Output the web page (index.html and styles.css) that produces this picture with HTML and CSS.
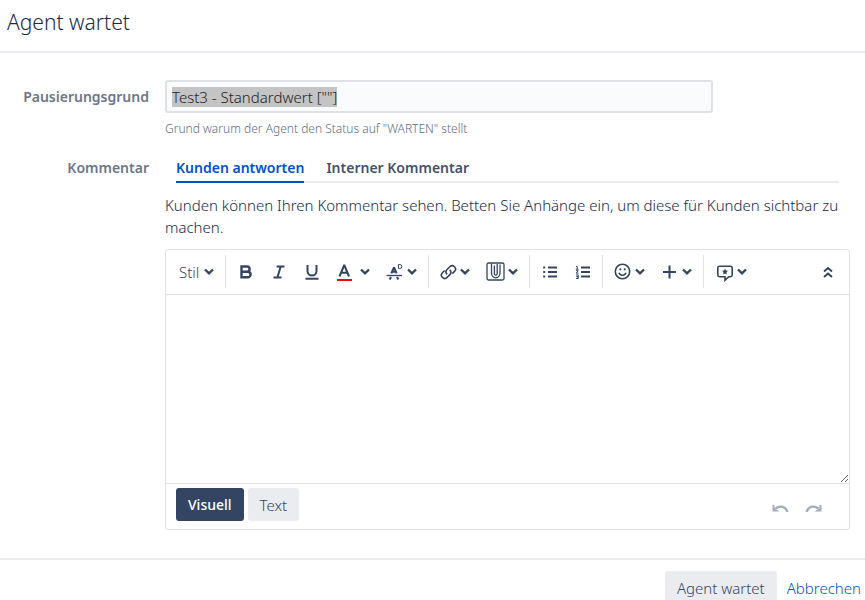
FILE: index.html
```html
<!DOCTYPE html>
<html lang="de">
<head>
  <meta charset="UTF-8">
  <meta name="viewport" content="width=device-width, initial-scale=1.0">
  <title>Agent wartet</title>
  <link rel="stylesheet" href="styles.css">
</head>
<body>
  <header class="dialog-header">
    <h1>Agent wartet</h1>
  </header>

  <form class="dialog-form" id="wait-form">
    <div class="dialog-content">
      <div class="field-group">
        <label class="field-label" for="pause-reason">Pausierungsgrund</label>
        <div class="field-body">
          <input type="text" class="text-field" id="pause-reason" value="Test3 - Standardwert [&quot;&quot;]">
          <div class="description">Grund warum der Agent den Status auf "WARTEN" stellt</div>
        </div>
      </div>

      <div class="field-group">
        <label class="field-label" for="comment">Kommentar</label>
        <div class="field-body">
          <div class="tabs" role="tablist">
            <button type="button" class="tab active" role="tab" aria-selected="true">Kunden antworten</button>
            <button type="button" class="tab" role="tab" aria-selected="false">Interner Kommentar</button>
          </div>
          <p class="hint">Kunden können Ihren Kommentar sehen. Betten Sie Anhänge ein, um diese für Kunden sichtbar zu machen.</p>

          <div class="editor">
            <div class="toolbar">
              <div class="tool-group">
                <button type="button" class="tool menu style-menu">Stil
                  <svg class="chevron" width="10" height="10" viewBox="0 0 10 10"><path d="M1 2.500 5 6.300 9 2.500"/></svg>
                </button>
              </div>
              <div class="tool-group">
                <button type="button" class="tool" aria-label="Fett">
                  <svg width="16" height="16" viewBox="0 0 16 16"><path class="line bold" d="M3.500 2.500h5.500a2.600 2.600 0 0 1 0 5.200H3.500zM3.500 7.700h6.300a2.800 2.800 0 0 1 0 5.600H3.500z"/></svg>
                </button>
                <button type="button" class="tool" aria-label="Kursiv">
                  <svg width="16" height="16" viewBox="0 0 16 16"><path class="line" d="M5.500 2.500h8M2.500 13.500h8M9.700 2.500l-3.300 11"/></svg>
                </button>
                <button type="button" class="tool" aria-label="Unterstrichen">
                  <svg width="16" height="16" viewBox="0 0 16 16"><path class="line" d="M3.500 1v6a4.500 4.500 0 0 0 9 0V1M1.500 14.800h13"/></svg>
                </button>
                <button type="button" class="tool menu color-menu" aria-label="Textfarbe">
                  <svg width="17" height="18" viewBox="0 0 17 18"><path class="line" d="M3.500 13.500 8 2.500h.5L13 13.500M5 9.800h6.500"/><path class="color-bar" d="M1 16h15v2H1z"/></svg>
                  <svg class="chevron" width="10" height="10" viewBox="0 0 10 10"><path d="M1 2.500 5 6.300 9 2.500"/></svg>
                </button>
                <button type="button" class="tool menu" aria-label="Weitere Formatierung">
                  <svg width="17" height="18" viewBox="0 0 17 18"><path class="line" d="M5.300 10.300 7.700 5h.6l2.400 5.300M6.500 8.800h3M5 14l-1.300 2.500M11 14l1.300 2.500"/><path class="line thin" d="M.5 12.500h15.500"/><path class="line fine" d="M12.500 1.500h1.300a2 2 0 0 1 0 4h-1.300z"/></svg>
                  <svg class="chevron" width="10" height="10" viewBox="0 0 10 10"><path d="M1 2.500 5 6.300 9 2.500"/></svg>
                </button>
              </div>
              <div class="tool-group">
                <button type="button" class="tool menu tight" aria-label="Link">
                  <svg width="17" height="16" viewBox="0 0 17 16"><path class="line smile" d="M7.200 10.300A3.300 3.300 0 0 1 6.800 5.700l3-3a3.300 3.300 0 0 1 4.700 4.700L12.300 9.600M9.700 5.900a3.300 3.300 0 0 1 .4 4.500l-3 3a3.300 3.300 0 0 1-4.700-4.700L4.700 6.500"/></svg>
                  <svg class="chevron" width="10" height="10" viewBox="0 0 10 10"><path d="M1 2.500 5 6.300 9 2.500"/></svg>
                </button>
                <button type="button" class="tool menu tight" aria-label="Anhang">
                  <svg width="19" height="19" viewBox="0 0 19 19"><rect class="line thin" x="1" y="1" width="17" height="17" rx="1.500"/><path class="line thin" d="M5.500 1.500v9.500a4 4.500 0 0 0 8.500 0V2.500M11.200 2v9.500a1.400 1.600 0 0 1-2.800 0V3.500"/></svg>
                  <svg class="chevron" width="10" height="10" viewBox="0 0 10 10"><path d="M1 2.500 5 6.300 9 2.500"/></svg>
                </button>
              </div>
              <div class="tool-group">
                <button type="button" class="tool" aria-label="Aufzählung">
                  <svg width="16" height="16" viewBox="0 0 16 16"><path class="line" d="M6 3.500h9M6 8h9M6 12.500h9M1.200 3.500h2M1.200 8h2M1.200 12.500h2"/></svg>
                </button>
                <button type="button" class="tool" aria-label="Nummerierte Liste">
                  <svg width="16" height="16" viewBox="0 0 16 16"><path class="line" d="M6 3.500h9M6 8h9M6 12.500h9"/><path class="line fine" d="M1 2.500h1.200V5.200M.8 5.200h2.800M1 6.700h2.200L1.200 9.200h2.400M1 11h2.300v1.700H1.500h1.800v1.800H1"/></svg>
                </button>
              </div>
              <div class="tool-group">
                <button type="button" class="tool menu" aria-label="Emoticon">
                  <svg width="17" height="17" viewBox="0 0 17 17"><circle class="line smile" cx="8.500" cy="8.500" r="7.200"/><path class="line smile" d="M5 9.700a3.700 3.700 0 0 0 7 0"/><circle cx="6.300" cy="6.300" r="1.100"/><circle cx="10.700" cy="6.300" r="1.100"/></svg>
                  <svg class="chevron" width="10" height="10" viewBox="0 0 10 10"><path d="M1 2.500 5 6.300 9 2.500"/></svg>
                </button>
                <button type="button" class="tool menu" aria-label="Einfügen">
                  <svg width="17" height="16" viewBox="0 0 17 16"><path class="line" d="M8.500 1.500v13M2 8h13"/></svg>
                  <svg class="chevron" width="10" height="10" viewBox="0 0 10 10"><path d="M1 2.500 5 6.300 9 2.500"/></svg>
                </button>
              </div>
              <div class="tool-group">
                <button type="button" class="tool menu tight" aria-label="Textvorlagen">
                  <svg width="19" height="21" viewBox="0 0 19 21"><path class="line smile" d="M4.500 5.300h11A1.700 1.700 0 0 1 17.200 7v7a1.700 1.700 0 0 1-1.700 1.700h-1.800L10 19.300v-3.600H4.500A1.700 1.700 0 0 1 2.800 14V7A1.700 1.700 0 0 1 4.500 5.300z"/><path d="m10 7.500.9 2 2.100.3-1.500 1.500.3 2.100-1.800-1-1.800 1 .3-2.100L7 9.800l2.100-.3z"/></svg>
                  <svg class="chevron" width="10" height="10" viewBox="0 0 10 10"><path d="M1 2.500 5 6.300 9 2.500"/></svg>
                </button>
              </div>
              <button type="button" class="tool collapse" aria-label="Symbolleiste einklappen">
                <svg width="12" height="12" viewBox="0 0 12 12"><path class="line" d="M2 5.500 6 2l4 3.500M2 11l4-3.500 4 3.500"/></svg>
              </button>
            </div>

            <textarea class="editor-area" id="comment"></textarea>

            <div class="editor-footer">
              <button type="button" class="button mode selected">Visuell</button>
              <button type="button" class="button mode">Text</button>
              <div class="history">
                <button type="button" class="tool" aria-label="Rückgängig" disabled>
                  <svg width="17" height="7" viewBox="0 0 17 7"><path class="line bold" d="M3.500 3.500C7 .8 13 .2 15.500 7"/><path d="M.5 0h2v3L7.500 6.500H.5z"/></svg>
                </button>
                <button type="button" class="tool" aria-label="Wiederholen" disabled>
                  <svg width="17" height="7" viewBox="0 0 17 7"><path class="line bold" d="M13.500 3.500C10 .8 4 .2 1.500 7"/><path d="M16.500 0h-2v3L9.500 6.500h7z"/></svg>
                </button>
              </div>
            </div>
          </div>
        </div>
      </div>
    </div>

    <footer class="dialog-footer">
      <button type="submit" class="button">Agent wartet</button>
      <a class="cancel" href="#">Abbrechen</a>
    </footer>
  </form>

  <script>
    // Preselect the default reason so it can be overwritten
    const reason = document.getElementById('pause-reason');
    reason.focus();
    reason.select();

    document.getElementById('wait-form').addEventListener('submit', (event) => {
      event.preventDefault();
    });
  </script>
</body>
</html>
```
FILE: styles.css
```css
* {
  box-sizing: border-box;
}
html {
  overflow: hidden;
}
body {
  margin: 0;
  background: #fff;
  color: #172b4d;
  font-family: "Noto Sans", "Open Sans", sans-serif;
  font-size: 15px;
  font-weight: 300;
  line-height: 22px;
}
button, input, textarea {
  font: inherit;
  color: inherit;
}
button {
  cursor: pointer;
}

/* Dialog */
.dialog-header {
  padding: 7px 7px 14px;
  border-bottom: 2px solid #ebecf0;
}
.dialog-header h1 {
  margin: 0;
  font-size: 21px;
  font-weight: 300;
  line-height: 30px;
}
.dialog-content {
  padding: 27px 15px 28px 0;
}
.dialog-footer {
  display: flex;
  justify-content: flex-end;
  align-items: center;
  gap: 10px;
  padding: 11px 4px;
  border-top: 2px solid #ebecf0;
}

/* Fields */
.field-group {
  display: flex;
  gap: 16px;
}
.field-label {
  flex: 0 0 149px;
  padding-top: 6px;
  text-align: right;
  color: #6b778c;
  font-size: 14px;
  font-weight: 600;
}
.field-body {
  flex: 1;
  min-width: 0;
}
.text-field {
  display: block;
  width: 80%;
  height: 33px;
  padding: 4px 5px;
  border: 2px solid #dfe1e6;
  border-radius: 3px;
  background: #fafbfc;
  outline: none;
}
.text-field::selection {
  background: #c4c4c4;
  color: #222;
}
.description {
  padding: 5px 0 11px;
  color: #5e6c84;
  font-size: 12px;
}

/* Tabs */
.tabs {
  display: flex;
  gap: 22px;
  margin: 0 11px;
  border-bottom: 2px solid #ebecf0;
}
.tab {
  margin-bottom: -2px;
  padding: 6px 0 2px;
  border: none;
  border-bottom: 2px solid transparent;
  background: none;
  color: #42526e;
  font-size: 14px;
  font-weight: 600;
}
.tab.active {
  border-bottom-color: #0052cc;
  color: #0052cc;
}
.hint {
  margin: 11px 0;
}

/* Editor */
.editor {
  border: 1px solid #dfe1e6;
  border-radius: 3px;
}
.toolbar {
  display: flex;
  align-items: center;
  padding: 5px 5px 6px 0;
  border-bottom: 1px solid #dfe1e6;
}
.tool-group {
  display: flex;
  padding: 0 3px;
  border-right: 1px solid #dfe1e6;
}
.tool-group:nth-child(6) {
  border-right: none;
}
.tool {
  display: flex;
  justify-content: center;
  align-items: center;
  width: 33px;
  height: 33px;
  padding: 0;
  border: none;
  background: none;
  color: #344563;
}
.tool svg {
  fill: currentColor;
}
.tool .line {
  fill: none;
  stroke: currentColor;
  stroke-width: 2;
}
.tool .bold {
  stroke-width: 2.4;
}
.tool .smile {
  stroke-width: 1.6;
}
.tool .thin {
  stroke-width: 1.3;
}
.tool .fine {
  stroke-width: 1;
}
.tool .chevron {
  fill: none;
  stroke: currentColor;
  stroke-width: 2.4;
}
.menu {
  gap: 4px;
  width: auto;
  padding: 0 8px;
}
.style-menu {
  gap: 5px;
  padding-left: 10px;
}
.color-menu {
  gap: 7px;
}
.tight {
  gap: 3px;
}
.color-bar {
  fill: #f00;
}
.collapse {
  margin-left: auto;
}
.editor-area {
  display: block;
  width: 100%;
  height: 188px;
  padding: 10px;
  border: none;
  outline: none;
  resize: vertical;
}
.editor-footer {
  display: flex;
  gap: 4px;
  padding: 4px 10px 8px;
  border-top: 1px solid #dfe1e6;
}
.history {
  display: flex;
  margin-left: auto;
  padding-right: 9px;
}
.history .tool {
  align-items: flex-end;
  height: 24px;
  color: #a5adba;
}

/* Buttons */
.button {
  height: 33px;
  padding: 0 12px;
  border: none;
  border-radius: 3px;
  background: #ebecf0;
  color: #344563;
}
.button.selected {
  background: #344563;
  color: #fff;
  font-size: 14px;
  font-weight: 500;
}
.cancel {
  color: #0052cc;
  text-decoration: none;
}
```
